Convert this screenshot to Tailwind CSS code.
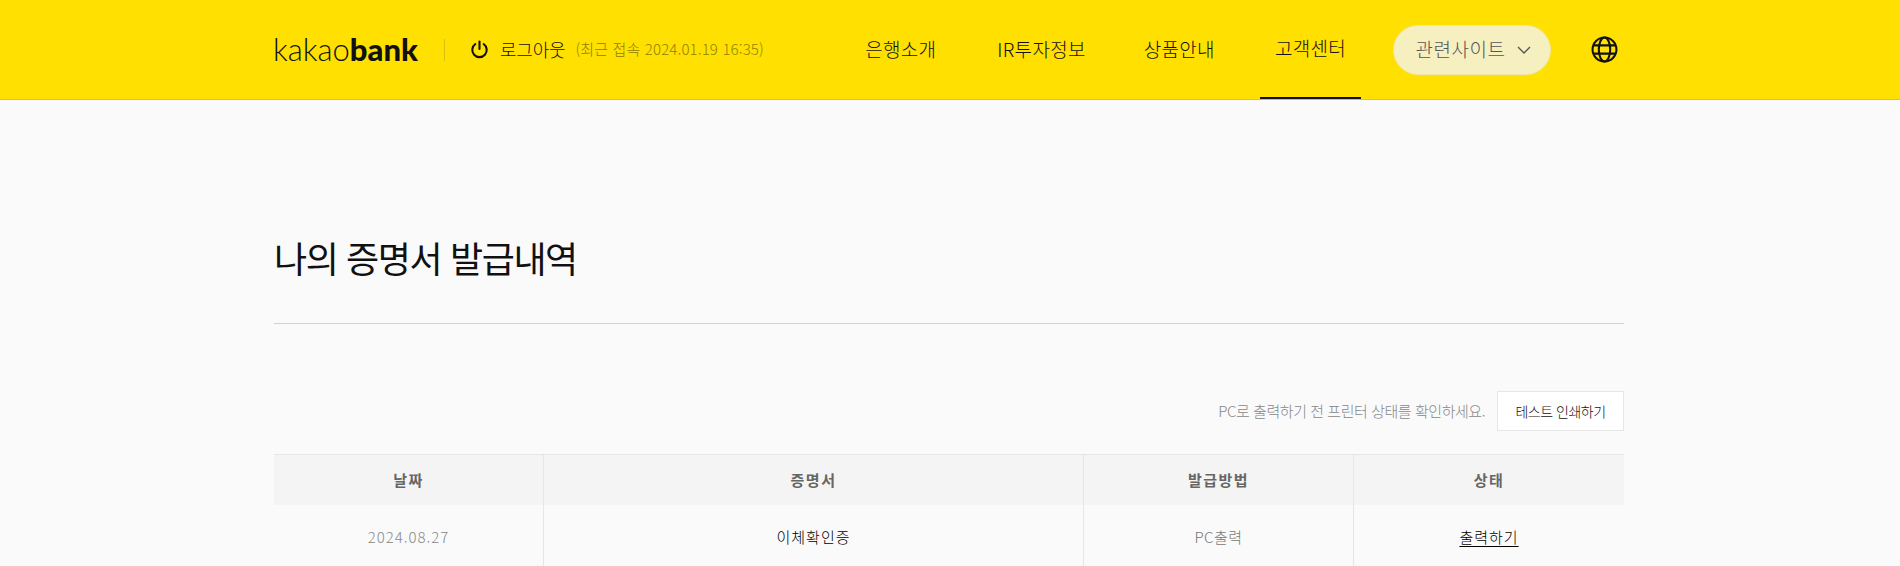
<!DOCTYPE html>
<html lang="ko">
<head>
    <meta charset="UTF-8">
    <meta name="viewport" content="width=device-width, initial-scale=1.0">
    <title>나의 증명서 발급내역</title>
    <script src="https://cdn.jsdelivr.net/npm/@tailwindcss/browser@4"></script>
</head>
<body class="bg-[#fafafa] font-['Noto_Sans_CJK_KR','Noto_Sans',sans-serif] overflow-hidden">
    <header class="h-[100px] bg-[#ffe000] border-b border-[#e6ca00]">
        <div class="w-[1350px] h-full ml-[274px] flex items-center">
            <div class="w-[145px] -ml-[1px] font-['Lato',sans-serif] text-[31px] leading-none text-[#111] font-light">kakao<span class="font-black">bank</span></div>
            <div class="w-px h-[22px] bg-[#d9bf10] ml-[26px]"></div>
            <svg class="ml-[25px]" width="19" height="19" viewBox="0 0 20 20" fill="none" stroke="#111" stroke-width="2.2" stroke-linecap="round">
                <path d="M10 1.5v8"/>
                <path d="M5.6 4.2a7.6 7.6 0 1 0 8.8 0"/>
            </svg>
            <span class="ml-[11px] text-[18px] font-light tracking-[-0.2px] text-[#111]">로그아웃</span>
            <span class="ml-[10px] text-[15px] font-light tracking-[0.15px] text-[#8f8100]">(최근 접속 2024.01.19 16:35)</span>

            <nav class="ml-auto flex h-full gap-[30px] text-[19px] font-light tracking-[0.3px] text-[#111]">
                <a class="pl-[15px] pr-[16px] flex items-center justify-center">은행소개</a>
                <a class="pl-[15px] pr-[13px] flex items-center justify-center">IR투자정보</a>
                <a class="px-[15px] flex items-center justify-center">상품안내</a>
                <a class="px-[15px] flex items-center justify-center border-b-2 border-[#111]">고객센터</a>
            </nav>
            <button class="ml-[32px] w-[158px] h-[50px] pl-[3px] rounded-full bg-[#f6efc0] border border-[#efe6a8] flex items-center justify-center gap-[12px] text-[19px] font-light tracking-[0.5px] text-[#555]">
                관련사이트
                <svg width="14" height="8" viewBox="0 0 14 8" fill="none" stroke="#555" stroke-width="1.3"><path d="M1 1l6 6 6-6"/></svg>
            </button>
            <svg class="ml-[40px] mr-[6px]" width="27" height="27" viewBox="0 0 26 26" fill="none" stroke="#111" stroke-width="2">
                <circle cx="13" cy="13" r="11.5"/>
                <ellipse cx="13" cy="13" rx="5.5" ry="11.5"/>
                <path d="M2 9h22M2 17h22"/>
            </svg>
        </div>
    </header>

    <main class="w-[1350px] ml-[274px]">
        <h1 class="pt-[129px] pb-[38px] text-[36px] leading-[56px] tracking-[-1.4px] text-[#111] border-b border-[#d2d2d2]">나의 증명서 발급내역</h1>

        <div class="mt-[67px] flex items-center justify-end">
            <span class="text-[15px] font-light tracking-[-0.45px] text-[#888]">PC로 출력하기 전 프린터 상태를 확인하세요.</span>
            <button class="ml-[12px] w-[127px] h-[40px] bg-white border border-[#e6e6e6] text-[14px] font-light tracking-[-0.5px] text-[#111]">테스트 인쇄하기</button>
        </div>

        <div class="mt-[23px] grid grid-cols-[270px_540px_270px_270px] border-t border-[#e6e6e6] text-center text-[15px]">
            <div class="h-[50px] bg-[#f4f4f4] border-r border-[#e6e6e6] flex items-center justify-center font-bold tracking-[1.5px] text-[#666]">날짜</div>
            <div class="h-[50px] bg-[#f4f4f4] border-r border-[#e6e6e6] flex items-center justify-center font-bold tracking-[1.5px] text-[#666]">증명서</div>
            <div class="h-[50px] bg-[#f4f4f4] border-r border-[#e6e6e6] flex items-center justify-center font-bold tracking-[1.5px] text-[#666]">발급방법</div>
            <div class="h-[50px] bg-[#f4f4f4] flex items-center justify-center font-bold tracking-[1.5px] text-[#666]">상태</div>

            <div class="h-[64px] border-r border-[#e6e6e6] flex items-center justify-center font-light tracking-[1px] text-[#888]">2024.08.27</div>
            <div class="h-[64px] border-r border-[#e6e6e6] flex items-center justify-center font-light tracking-[1px] text-[#000]">이체확인증</div>
            <div class="h-[64px] border-r border-[#e6e6e6] flex items-center justify-center font-light tracking-[0.5px] text-[#777]">PC출력</div>
            <div class="h-[64px] flex items-center justify-center font-light tracking-[1px] text-[#000]"><a class="underline underline-offset-3">출력하기</a></div>
        </div>
    </main>
</body>
</html>
